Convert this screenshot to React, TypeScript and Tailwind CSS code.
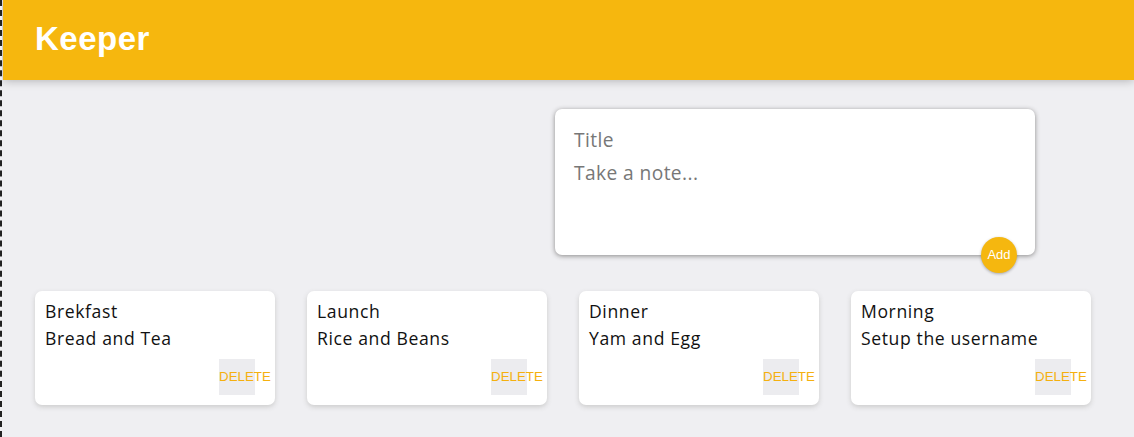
import React from "react";

const notes = [
  { title: "Brekfast", content: "Bread and Tea" },
  { title: "Launch", content: "Rice and Beans" },
  { title: "Dinner", content: "Yam and Egg" },
  { title: "Morning", content: "Setup the username" },
];

export default function App() {
  return (
    <div className="min-h-[437px] w-[1134px] bg-[#efeff2] border-l-2 border-dashed border-[#222] overflow-hidden" style={{ fontFamily: '"Open Sans", sans-serif' }}>
      <div className="ml-px min-h-[437px]">
        <header className="h-[80px] bg-[#f6b70e] px-8 flex items-center shadow-[0_0_10px_0_rgba(0,0,0,0.3)] relative z-10">
          <h1 className="text-white text-[33px] font-bold tracking-[0.5px] leading-none pb-1" style={{ fontFamily: '"Liberation Sans", Arial, sans-serif' }}>
            Keeper
          </h1>
        </header>
        <div className="pt-[29px] pl-[552px]">
          <div className="relative w-[480px] h-[146px] bg-white rounded-[7px] p-[15px] shadow-[0_1px_5px_rgb(138,137,137)]">
            <div className="px-1 py-1 text-[19.2px] leading-[23px] tracking-[0.4px] text-[#777]">Title</div>
            <div className="px-1 pt-[6px] text-[19.2px] leading-[23px] tracking-[0.4px] text-[#777]">Take a note...</div>
            <button
              className="absolute right-[18px] -bottom-[18px] w-9 h-9 rounded-full bg-[#f5b70f] text-white text-[13px] shadow-[0_1px_3px_rgba(0,0,0,0.3)] flex items-center justify-center"
              style={{ fontFamily: '"Liberation Sans", Arial, sans-serif' }}
            >
              Add
            </button>
          </div>
        </div>
        <div className="flex pt-[36px] pl-[32px] gap-8">
          {notes.map((n) => (
            <div key={n.title} className="w-[240px] h-[114px] bg-white rounded-[7px] p-[10px] shadow-[0_2px_5px_#ccc] flex flex-col">
              <h2 className="text-[17.6px] leading-[21px] tracking-[0.6px] text-[#111] mb-[6px]">{n.title}</h2>
              <p className="text-[17.6px] leading-[21px] tracking-[0.6px] text-[#111] mb-[10px]">{n.content}</p>
              <div className="flex justify-end pr-[10px]">
                <button
                  className="w-9 h-9 bg-[#ececef] text-[#f5b00f] text-[13.33px] text-left whitespace-nowrap overflow-visible"
                  style={{ fontFamily: '"Liberation Sans", Arial, sans-serif' }}
                >
                  DELETE
                </button>
              </div>
            </div>
          ))}
        </div>
      </div>
    </div>
  );
}
